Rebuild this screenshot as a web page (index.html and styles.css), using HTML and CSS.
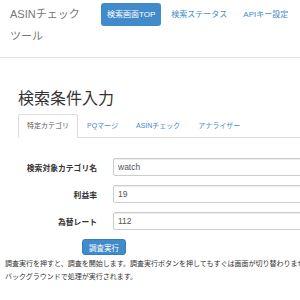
FILE: index.html
```html
<!DOCTYPE html>
<html lang="ja">
<head>
    <meta charset="UTF-8">
    <meta name="viewport" content="width=device-width, initial-scale=1.0">
    <title>ASINチェックツール</title>
    <link rel="stylesheet" href="styles.css">
</head>
<body>
    <div class="navbar">
        <a class="brand" href="#">ASINチェックツール</a>
        <ul class="nav">
            <li><a class="active" href="#">検索画面TOP</a></li>
            <li><a href="#">検索ステータス</a></li>
            <li><a href="#">APIキー設定</a></li>
            <li><a href="#">DB管理</a></li>
        </ul>
    </div>
    <div class="content">
        <h1>検索条件入力</h1>
        <ul class="tabs">
            <li><a class="active" href="#">特定カテゴリ</a></li>
            <li><a href="#">PQマージ</a></li>
            <li><a href="#">ASINチェック</a></li>
            <li><a href="#">アナライザー</a></li>
        </ul>
        <form class="search-form">
            <div class="row">
                <label for="category">検索対象カテゴリ名</label>
                <input type="text" id="category" value="watch">
            </div>
            <div class="row">
                <label for="rate">利益率</label>
                <input type="text" id="rate" value="19">
            </div>
            <div class="row">
                <label for="fx">為替レート</label>
                <input type="text" id="fx" value="112">
            </div>
            <button type="button" class="btn">調査実行</button>
        </form>
    </div>
    <p class="note">調査実行を押すと、調査を開始します。調査実行ボタンを押してもすぐは画面が切り替わりません。<br>バックグラウンドで処理が実行されます。</p>
</body>
</html>
```

FILE: styles.css
```css
html, body {
    overflow: hidden;
}
body {
    margin: 0;
    width: 460px;
    font-family: "Liberation Sans", "Noto Sans CJK JP", sans-serif;
    color: #333;
    background: #fff;
}
a {
    text-decoration: none;
    color: #428bca;
}
.navbar {
    display: flex;
    height: 57px;
    border-bottom: 1px solid #e7e7e7;
}
.brand {
    width: 80px;
    padding: 3px 0 0 10px;
    font-size: 11px;
    line-height: 22px;
    color: #777;
}
.nav {
    display: flex;
    list-style: none;
    margin: 3px 0 0 11px;
    padding: 0;
}
.nav li {
    margin-right: 4px;
}
.nav a {
    display: block;
    padding: 0 6px;
    height: 23px;
    line-height: 23px;
    font-size: 8px;
    border-radius: 3px;
}
.nav a.active {
    background: #428bca;
    color: #fff;
}
.content {
    padding-left: 18px;
}
h1 {
    margin: 32px 0 6px;
    font-size: 16px;
    line-height: 18px;
    font-weight: normal;
}
.tabs {
    display: flex;
    list-style: none;
    margin: 0;
    padding: 0;
    border-bottom: 1px solid #ddd;
}
.tabs a {
    display: block;
    padding: 6px 8px;
    line-height: 10px;
    font-size: 7px;
    border: 1px solid transparent;
    border-radius: 3px 3px 0 0;
    margin-bottom: -1px;
}
.tabs a.active {
    color: #555;
    background: #fff;
    border-color: #ddd #ddd transparent;
}
.search-form {
    margin: 20px 0 0 -18px;
}
.row {
    display: flex;
    align-items: center;
    margin-bottom: 9px;
}
.row label {
    width: 97px;
    text-align: right;
    font-size: 7.8px;
    font-weight: bold;
}
.row input {
    box-sizing: border-box;
    margin-left: 16px;
    width: 320px;
    height: 18px;
    padding: 0 4px;
    border: 1px solid #ccc;
    border-radius: 2px;
    font-family: inherit;
    font-size: 8.5px;
    color: #555;
    box-shadow: inset 0 1px 1px rgba(0, 0, 0, 0.075);
}
.btn {
    display: block;
    margin: 5px 0 0 82px;
    height: 16px;
    padding: 0 6px;
    border: 1px solid #357ebd;
    border-radius: 3px;
    background: #428bca;
    color: #fff;
    font-family: inherit;
    font-size: 7.5px;
}
.note {
    margin: 2px 0 0;
    padding-left: 5px;
    white-space: nowrap;
    font-size: 7px;
    line-height: 13px;
}
```
